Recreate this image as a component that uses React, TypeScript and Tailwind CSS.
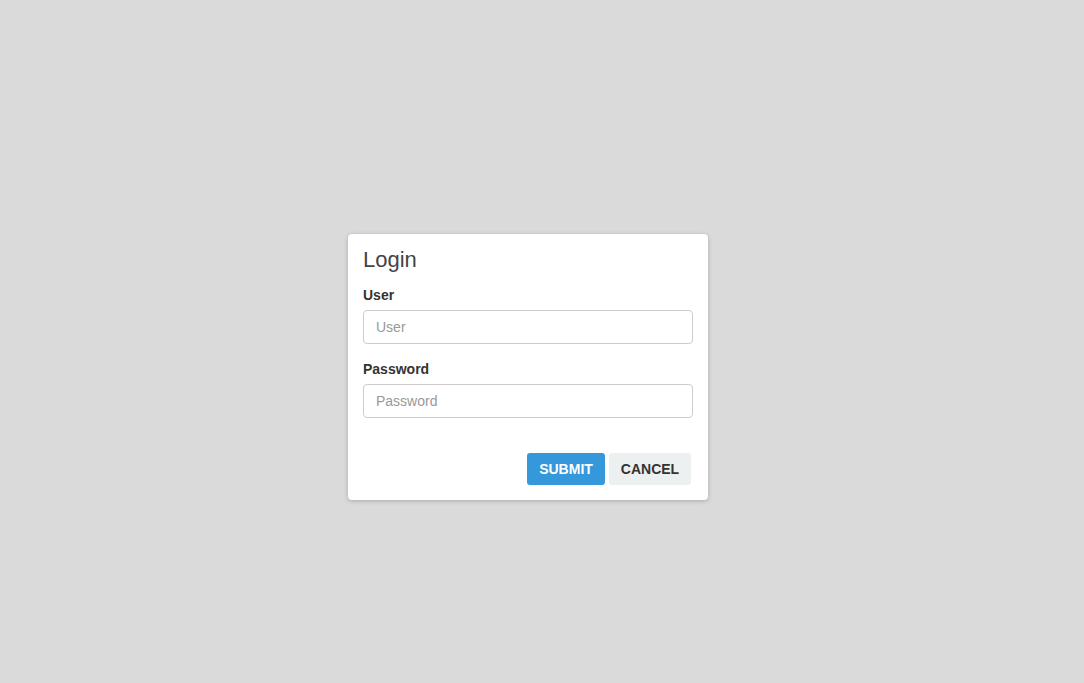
import React from "react";

const App = () => {
  return (
    <div className="min-h-[683px] w-full bg-[#dadada] pt-[234px] pl-[348px] font-['Liberation_Sans',Arial,sans-serif]">
      <div className="w-[360px] rounded-[4px] bg-white px-[15px] pt-[14px] pb-[15px] shadow-[0_1px_4px_rgba(0,0,0,0.22)]">
        <h3 className="mb-[14px] h-[24px] text-[22px] leading-[24px] text-[#444]">Login</h3>
        <div className="mb-[16px]">
          <label className="mb-[6px] block text-[14px] font-bold leading-[18px] text-[#333]">User</label>
          <input
            type="text"
            placeholder="User"
            className="block h-[34px] w-full rounded-[4px] border border-[#ccc] px-[12px] text-[14px] text-[#555] outline-none placeholder:text-[#999]"
          />
        </div>
        <div>
          <label className="mb-[6px] block text-[14px] font-bold leading-[18px] text-[#333]">Password</label>
          <input
            type="password"
            placeholder="Password"
            className="block h-[34px] w-full rounded-[4px] border border-[#ccc] px-[12px] text-[14px] text-[#555] outline-none placeholder:text-[#999]"
          />
        </div>
        <div className="mt-[35px] mr-[2px] flex justify-end gap-[4px]">
          <button className="h-[32px] w-[78px] rounded-[3px] bg-[#3498db] text-[14px] font-bold text-white">
            SUBMIT
          </button>
          <button className="h-[32px] w-[82px] rounded-[3px] bg-[#ecf0f1] text-[14px] font-bold text-[#333]">
            CANCEL
          </button>
        </div>
      </div>
    </div>
  );
};

export default App;
